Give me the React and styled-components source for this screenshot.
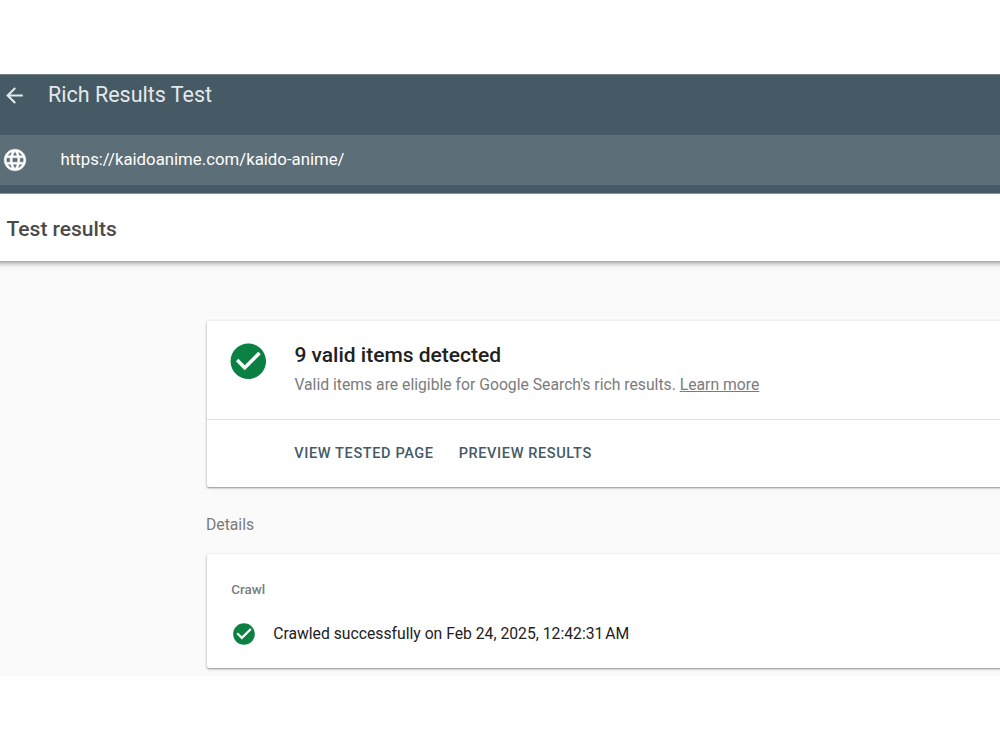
import React from 'react';
import styled, { createGlobalStyle } from 'styled-components';
import { MdArrowBack, MdCheckCircle, MdLanguage } from 'react-icons/md';

const App = () => {
  return (
    <>
      <GlobalStyle />
      <Page>
        <Header>
          <TitleBar>
            <MdArrowBack size={25} />
            <AppTitle>Rich Results Test</AppTitle>
          </TitleBar>
          <UrlBar>
            <GlobeIcon size={26} />
            <Url>https://kaidoanime.com/kaido-anime/</Url>
          </UrlBar>
        </Header>
        <SubHeader>
          <SubHeaderTitle>Test results</SubHeaderTitle>
        </SubHeader>
        <Content>
          <Card>
            <Summary>
              <ValidIcon size={42.6} />
              <SummaryText>
                <SummaryTitle>9 valid items detected</SummaryTitle>
                <Description>
                  Valid items are eligible for Google Search's rich results. <LearnMore>Learn more</LearnMore>
                </Description>
              </SummaryText>
            </Summary>
            <Actions>
              <Action>VIEW TESTED PAGE</Action>
              <Action>PREVIEW RESULTS</Action>
            </Actions>
          </Card>
          <Details>Details</Details>
          <Card>
            <CrawlTitle>Crawl</CrawlTitle>
            <CrawlRow>
              <ValidIcon size={26} />
              <CrawlText>Crawled successfully on Feb 24, 2025, 12:42:31&#8239;AM</CrawlText>
            </CrawlRow>
          </Card>
        </Content>
      </Page>
    </>
  );
};
export default App;

const GlobalStyle = createGlobalStyle`
  body {
    margin: 0;
    background: #ffffff;
    font-family: Roboto, sans-serif;
  }
`;

const Page = styled.div`
  width: 100%;
  height: 750px;
  padding: 74px 0;
  box-sizing: border-box;
  overflow: hidden;
  display: flex;
  flex-direction: column;
`;

const Header = styled.header`
  flex: none;
  height: 120px;
  box-sizing: border-box;
  border-top: 1px solid #6f7f87;
  border-bottom: 1px solid #84929a;
  background: #455a64;
  color: #ffffff;
`;

const TitleBar = styled.div`
  display: flex;
  align-items: center;
  height: 60px;
  padding: 0 0 20px 2px;
  box-sizing: border-box;
  color: #e4e8ea;
`;

const AppTitle = styled.span`
  margin-left: 21px;
  font-size: 21.5px;
  line-height: 24px;
`;

const UrlBar = styled.div`
  display: flex;
  align-items: center;
  height: 50px;
  padding-left: 2px;
  background: #5c6e77;
`;

const GlobeIcon = styled(MdLanguage)`
  flex: none;

  path:last-child {
    stroke: #ffffff;
    stroke-width: 0.4px;
  }
`;

const Url = styled.span`
  margin: -2px 0 0 32.5px;
  font-size: 16.8px;
  line-height: 20px;
`;

const SubHeader = styled.div`
  flex: none;
  position: relative;
  display: flex;
  align-items: center;
  height: 67px;
  margin: 0 -10px;
  padding: 3px 0 0 16.5px;
  box-sizing: border-box;
  background: #ffffff;
  box-shadow: 0 1px 6px rgba(0, 0, 0, 0.55);
  clip-path: inset(0 0 -12px 0);
`;

const SubHeaderTitle = styled.span`
  font-size: 21px;
  font-weight: 500;
  line-height: 24px;
  color: #4a4a4a;
`;

const Content = styled.main`
  flex: 1;
  min-height: 0;
  padding: 60.4px 0 0 206.6px;
  background: #fafafa;
  overflow: hidden;
`;

const Card = styled.section`
  margin-right: -10px;
  border-radius: 2px;
  background: #ffffff;
  box-shadow: 0 1px 1px rgba(0, 0, 0, 0.16), 0 1px 3px rgba(0, 0, 0, 0.32);
`;

const Summary = styled.div`
  display: flex;
  height: 98.6px;
  padding: 18.6px 0 0 20.4px;
  box-sizing: border-box;
  border-bottom: 1px solid #e0e0e0;
`;

const ValidIcon = styled(MdCheckCircle)`
  flex: none;
  color: #0b8043;
`;

const SummaryText = styled.div`
  padding: 3px 0 0 24.8px;
`;

const SummaryTitle = styled.div`
  font-size: 21px;
  font-weight: 500;
  line-height: 24px;
  color: #212121;
`;

const Description = styled.div`
  margin-top: 8px;
  font-size: 15.72px;
  line-height: 20px;
  color: #7b7b7b;
`;

const LearnMore = styled.span`
  text-decoration: underline;
`;

const Actions = styled.div`
  display: flex;
  align-items: center;
  gap: 25px;
  height: 67.4px;
  padding: 1px 0 0 87.7px;
  box-sizing: border-box;
`;

const Action = styled.span`
  font-size: 14.55px;
  font-weight: 500;
  line-height: 20px;
  letter-spacing: 0.6px;
  color: #455a64;
`;

const Details = styled.div`
  height: 67px;
  padding-top: 28px;
  box-sizing: border-box;
  margin-left: -0.6px;
  font-size: 15.72px;
  line-height: 20px;
  color: #7b7b7b;
`;

const CrawlTitle = styled.div`
  padding: 26px 0 0 24.7px;
  font-size: 13.4px;
  font-weight: 500;
  line-height: 20px;
  color: #7b7b7b;
`;

const CrawlRow = styled.div`
  display: flex;
  align-items: center;
  height: 67.5px;
  padding: 0 0 0.5px 24.3px;
  box-sizing: border-box;
`;

const CrawlText = styled.span`
  margin: 1px 0 0 16.3px;
  font-size: 15.73px;
  line-height: 20px;
  color: #212121;
`;
